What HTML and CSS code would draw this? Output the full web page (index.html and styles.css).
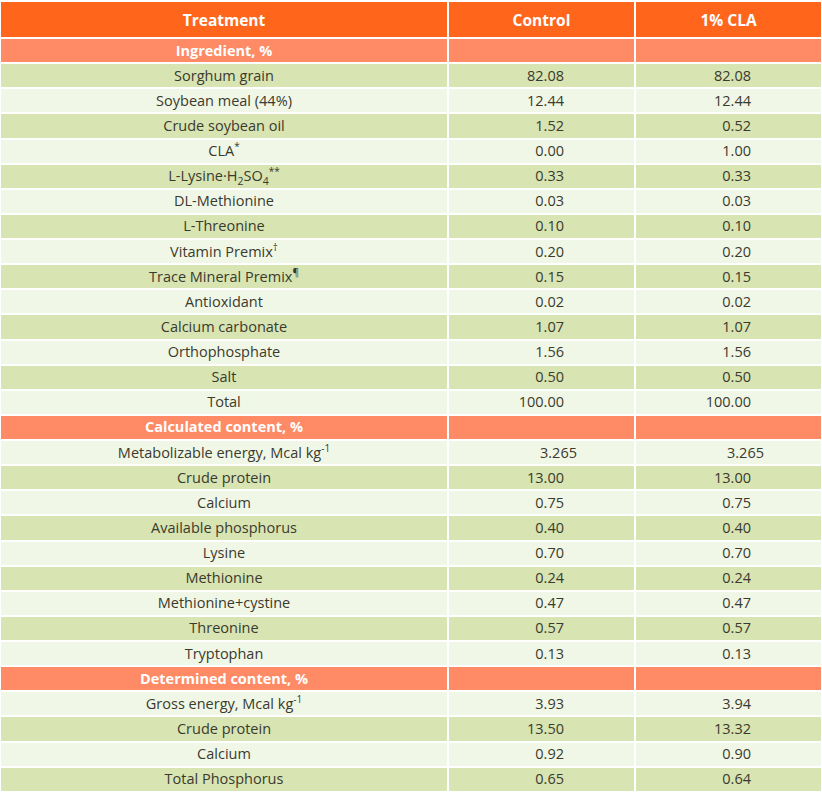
FILE: index.html
```html
<!DOCTYPE html>
<html>
<head>
<meta charset="utf-8">
<link rel="stylesheet" href="styles.css">
</head>
<body>
<table class="diet">
  <thead>
    <tr class="head">
      <th class="label">Treatment</th>
      <th>Control</th>
      <th>1% CLA</th>
    </tr>
  </thead>
  <tbody>
    <tr class="sect"><td class="label">Ingredient, %</td><td></td><td></td></tr>
    <tr class="g"><td class="label">Sorghum grain</td><td class="num">82.08</td><td class="num">82.08</td></tr>
    <tr class="l"><td class="label">Soybean meal (44%)</td><td class="num">12.44</td><td class="num">12.44</td></tr>
    <tr class="g"><td class="label">Crude soybean oil</td><td class="num">1.52</td><td class="num">0.52</td></tr>
    <tr class="l"><td class="label">CLA<sup>*</sup></td><td class="num">0.00</td><td class="num">1.00</td></tr>
    <tr class="g"><td class="label">L-Lysine·H<sub>2</sub>SO<sub>4</sub><sup>**</sup></td><td class="num">0.33</td><td class="num">0.33</td></tr>
    <tr class="l"><td class="label">DL-Methionine</td><td class="num">0.03</td><td class="num">0.03</td></tr>
    <tr class="g"><td class="label">L-Threonine</td><td class="num">0.10</td><td class="num">0.10</td></tr>
    <tr class="l"><td class="label">Vitamin Premix<sup>†</sup></td><td class="num">0.20</td><td class="num">0.20</td></tr>
    <tr class="g"><td class="label">Trace Mineral Premix<sup>¶</sup></td><td class="num">0.15</td><td class="num">0.15</td></tr>
    <tr class="l"><td class="label">Antioxidant</td><td class="num">0.02</td><td class="num">0.02</td></tr>
    <tr class="g"><td class="label">Calcium carbonate</td><td class="num">1.07</td><td class="num">1.07</td></tr>
    <tr class="l"><td class="label">Orthophosphate</td><td class="num">1.56</td><td class="num">1.56</td></tr>
    <tr class="g"><td class="label">Salt</td><td class="num">0.50</td><td class="num">0.50</td></tr>
    <tr class="l"><td class="label">Total</td><td class="num">100.00</td><td class="num">100.00</td></tr>
    <tr class="sect"><td class="label">Calculated content, %</td><td></td><td></td></tr>
    <tr class="l"><td class="label">Metabolizable energy, Mcal kg<sup>-1</sup></td><td class="num three">3.265</td><td class="num three">3.265</td></tr>
    <tr class="g"><td class="label">Crude protein</td><td class="num">13.00</td><td class="num">13.00</td></tr>
    <tr class="l"><td class="label">Calcium</td><td class="num">0.75</td><td class="num">0.75</td></tr>
    <tr class="g"><td class="label">Available phosphorus</td><td class="num">0.40</td><td class="num">0.40</td></tr>
    <tr class="l"><td class="label">Lysine</td><td class="num">0.70</td><td class="num">0.70</td></tr>
    <tr class="g"><td class="label">Methionine</td><td class="num">0.24</td><td class="num">0.24</td></tr>
    <tr class="l"><td class="label">Methionine+cystine</td><td class="num">0.47</td><td class="num">0.47</td></tr>
    <tr class="g"><td class="label">Threonine</td><td class="num">0.57</td><td class="num">0.57</td></tr>
    <tr class="l"><td class="label">Tryptophan</td><td class="num">0.13</td><td class="num">0.13</td></tr>
    <tr class="sect"><td class="label">Determined content, %</td><td></td><td></td></tr>
    <tr class="l"><td class="label">Gross energy, Mcal kg<sup>-1</sup></td><td class="num">3.93</td><td class="num">3.94</td></tr>
    <tr class="g"><td class="label">Crude protein</td><td class="num">13.50</td><td class="num">13.32</td></tr>
    <tr class="l"><td class="label">Calcium</td><td class="num">0.92</td><td class="num">0.90</td></tr>
    <tr class="g"><td class="label">Total Phosphorus</td><td class="num">0.65</td><td class="num">0.64</td></tr>
  </tbody>
</table>
</body>
</html>
```

FILE: styles.css
```css
html, body {
  margin: 0;
  padding: 0;
  background: #ffffff;
}

.diet {
  border-collapse: separate;
  border-spacing: 2px;
  width: 823px;
  margin-left: -1px;
  table-layout: fixed;
  font-family: "Open Sans", "Noto Sans", sans-serif;
  font-size: 14.5px;
  color: #3a3a2e;
}

.diet th, .diet td {
  padding: 0;
}

.diet th.label, .diet td.label {
  width: 446px;
}

.diet th {
  width: 185px;
}

.head th {
  background: #ff661c;
  color: #ffffff;
  font-weight: 700;
  font-size: 15.5px;
  height: 35px;
  text-align: center;
  vertical-align: middle;
}

.diet tbody td {
  height: 23.13px;
  text-align: center;
  vertical-align: middle;
  line-height: 18px;
}

.sect td {
  background: #ff8a66;
}

.sect td.label {
  color: #ffffff;
  font-weight: 700;
  font-size: 14.5px;
}

.g td {
  background: #d8e4b2;
}

.l td {
  background: #f1f7e6;
}

.diet td.num {
  text-align: right;
  padding-right: 70px;
}

.diet td.num.three {
  padding-right: 57px;
}

sup {
  font-size: 10px;
  line-height: 0;
  vertical-align: 6px;
}

sub {
  font-size: 10.5px;
  line-height: 0;
  vertical-align: -4px;
}
```
